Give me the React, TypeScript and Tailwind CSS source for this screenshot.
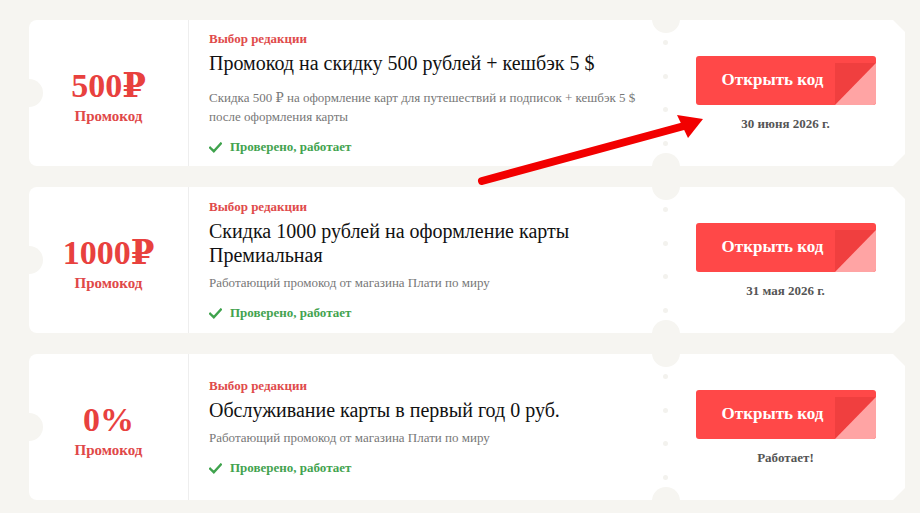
import { FC } from 'react'

const offers = [
  {
    value: '500₽',
    title: 'Промокод на скидку 500 рублей + кешбэк 5 $',
    desc: 'Скидка 500 ₽ на оформление карт для путешествий и подписок + кешбэк 5 $ после оформления карты',
    note: '30 июня 2026 г.',
    wide: true,
  },
  {
    value: '1000₽',
    title: 'Скидка 1000 рублей на оформление карты Премиальная',
    desc: 'Работающий промокод от магазина Плати по миру',
    note: '31 мая 2026 г.',
    wide: false,
  },
  {
    value: '0%',
    title: 'Обслуживание карты в первый год 0 руб.',
    desc: 'Работающий промокод от магазина Плати по миру',
    note: 'Работает!',
    wide: false,
  },
]

const Check: FC = () => (
  <svg width="13" height="11" viewBox="0 0 13 11" className="shrink-0">
    <path d="M1.2 5.8 L4.8 9.2 L11.8 1.6" fill="none" stroke="#3fa34d" strokeWidth="2.4" strokeLinecap="square" />
  </svg>
)

const Coupon: FC<{ offer: (typeof offers)[number] }> = ({ offer }) => (
  <div className="relative flex h-[146px] bg-white rounded-l-[8px] [clip-path:polygon(0_0,calc(100%-12px)_0,100%_12px,100%_calc(100%-12px),calc(100%-12px)_100%,0_100%)]">
    {/* left notch */}
    <div className="absolute left-[-14px] top-1/2 -translate-y-1/2 w-[28px] h-[28px] rounded-full bg-[#f6f5f1]" />
    {/* cutouts at the tear line */}
    <div className="absolute left-[623px] top-[-15px] w-[28px] h-[28px] rounded-full bg-[#f6f5f1]" />
    <div className="absolute left-[623px] bottom-[-15px] w-[28px] h-[28px] rounded-full bg-[#f6f5f1]" />

    <div className="w-[160px] shrink-0 flex flex-col items-center justify-center border-r border-[#eeeeee] pt-[6px]">
      <div className="text-[34px] leading-[40px] font-bold text-[#e8413e]">{offer.value}</div>
      <div className="text-[15px] leading-[20px] font-bold text-[#e04848]">Промокод</div>
    </div>

    <div className="w-[477px] shrink-0 flex flex-col justify-center pl-5 pr-6 py-[10px]">
      <div className="text-[13px] leading-[18px] font-bold text-[#e04b4b]">Выбор редакции</div>
      <div className="text-[20px] leading-[24px] text-[#111] mt-[3px]">{offer.title}</div>
      <div className={offer.wide ? 'text-[13px] leading-[19px] text-[#777] mt-[13px]' : 'text-[13px] leading-[19px] text-[#777] mt-[6px]'}>
        {offer.desc}
      </div>
      <div className="flex items-center gap-2 mt-[12px] text-[13px] leading-[18px] font-bold text-[#43a34f]">
        <Check />
        <span>Проверено, работает</span>
      </div>
    </div>

    <div className="relative flex-1 flex flex-col items-center justify-center">
      <div className="absolute left-[-3px] top-0 bottom-0 flex flex-col justify-between py-[20px]">
        <span className="block w-[5px] h-[5px] rounded-full bg-[#f3f2ee]" />
        <span className="block w-[5px] h-[5px] rounded-full bg-[#f3f2ee]" />
        <span className="block w-[5px] h-[5px] rounded-full bg-[#f3f2ee]" />
        <span className="block w-[5px] h-[5px] rounded-full bg-[#f3f2ee]" />
      </div>
      <button className="relative flex w-[180px] h-[49px] rounded-[3px] bg-[#ff4848] overflow-hidden mt-[2px]">
        <span className="flex-1 flex items-center justify-center pr-[26px] text-[17px] font-bold text-white">Открыть код</span>
        <svg width="41" height="42" viewBox="0 0 41 42" className="absolute right-0 bottom-0">
          <polygon points="0,0 41,0 0,42" fill="#f03f3f" />
          <polygon points="41,0 41,42 0,42" fill="#ffa4a4" />
        </svg>
      </button>
      <div className="mt-[10px] text-[13px] leading-[18px] font-bold text-[#555]">{offer.note}</div>
    </div>
  </div>
)

const App: FC = () => {
  return (
    <div className="relative w-[920px] h-[513px] overflow-hidden bg-[#f6f5f1] font-['Liberation_Serif','DejaVu_Serif',serif]">
      <div className="flex flex-col gap-[21px] pl-[29px] pr-[15px] pt-[20px]">
        {offers.map((o, i) => (
          <Coupon key={i} offer={o} />
        ))}
      </div>
      {/* red annotation arrow */}
      <svg className="absolute inset-0 pointer-events-none" width="920" height="513" viewBox="0 0 920 513">
        <line x1="482" y1="181" x2="684" y2="126" stroke="#f20000" strokeWidth="8" strokeLinecap="round" />
        <polygon points="703,119 677,115 688,138" fill="#f20000" />
      </svg>
    </div>
  )
}

export default App
